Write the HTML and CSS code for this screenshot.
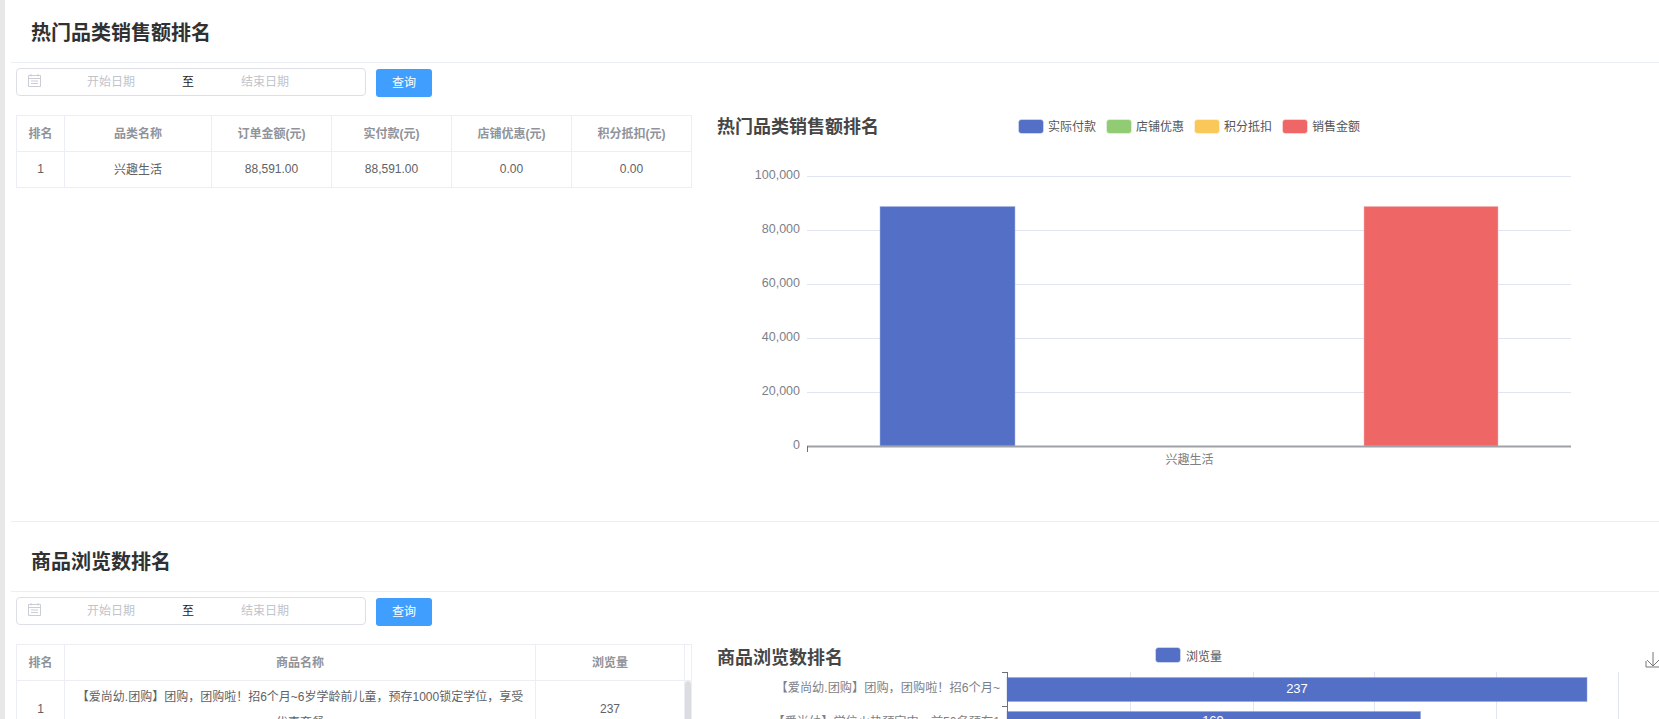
FILE: index.html
```html
<!DOCTYPE html>
<html lang="en">

<head>
  <meta charset="UTF-8">
  <meta name="viewport" content="width=device-width, initial-scale=1.0">
  <title>销售排名</title>
  <link rel="stylesheet" href="styles.css">
</head>

<body>
  <div class="page">
    <div class="side-strip"></div>
    <div class="main">

      <section class="rank-section">
        <h2 class="section-title">热门品类销售额排名</h2>
        <div class="toolbar">
          <div class="date-range">
            <svg class="date-icon" viewBox="0 0 15 15">
              <path d="M1.5 2.500h12v11h-12z M1.500 5.500h12 M4 1v2.500 M11 1v2.500 M4 8h7 M4 10.500h7" fill="none" stroke="#c9cdd6" stroke-width="1"/>
            </svg>
            <span class="date-input">开始日期</span>
            <span class="date-sep">至</span>
            <span class="date-input">结束日期</span>
          </div>
          <a href="#" class="query-btn">查询</a>
        </div>
        <div class="content-row">
          <table class="rank-table">
            <colgroup>
              <col class="col-rank">
              <col class="col-cat">
              <col class="col-num">
              <col class="col-num">
              <col class="col-num">
              <col class="col-num">
            </colgroup>
            <thead>
              <tr>
                <th>排名</th>
                <th>品类名称</th>
                <th>订单金额(元)</th>
                <th>实付款(元)</th>
                <th>店铺优惠(元)</th>
                <th>积分抵扣(元)</th>
              </tr>
            </thead>
            <tbody>
              <tr>
                <td>1</td>
                <td>兴趣生活</td>
                <td>88,591.00</td>
                <td>88,591.00</td>
                <td>0.00</td>
                <td>0.00</td>
              </tr>
            </tbody>
          </table>

          <svg class="chart chart-sales" viewBox="0 0 960 406">
            <text class="chart-title" x="17" y="18">热门品类销售额排名</text>

            <rect class="swatch" x="318.500" y="4.500" width="25" height="14" rx="3" fill="#5470c6"/>
            <text class="legend-text" x="348" y="15.500">实际付款</text>
            <rect class="swatch" x="406.500" y="4.500" width="25" height="14" rx="3" fill="#91cc75"/>
            <text class="legend-text" x="436" y="15.500">店铺优惠</text>
            <rect class="swatch" x="494.500" y="4.500" width="25" height="14" rx="3" fill="#fac858"/>
            <text class="legend-text" x="524" y="15.500">积分抵扣</text>
            <rect class="swatch" x="582.500" y="4.500" width="25" height="14" rx="3" fill="#ee6666"/>
            <text class="legend-text" x="612" y="15.500">销售金额</text>

            <path class="grid-line" d="M107 61.500H871 M107 115.500H871 M107 169.500H871 M107 223.500H871 M107 277.500H871"/>

            <text class="axis-num" text-anchor="end" x="100" y="64">100,000</text>
            <text class="axis-num" text-anchor="end" x="100" y="118">80,000</text>
            <text class="axis-num" text-anchor="end" x="100" y="172">60,000</text>
            <text class="axis-num" text-anchor="end" x="100" y="226">40,000</text>
            <text class="axis-num" text-anchor="end" x="100" y="280">20,000</text>
            <text class="axis-num" text-anchor="end" x="100" y="334">0</text>

            <rect x="180" y="91.500" width="135" height="239.500" fill="#5470c6" stroke="#a9b7e3" stroke-width="0.500"/>
            <rect x="664" y="91.500" width="134" height="239.500" fill="#ee6666" stroke="#f6b3b3" stroke-width="0.500"/>

            <path class="axis-line" d="M107 331.500H871"/>
            <path class="axis-tick" d="M107.500 331V337"/>
            <text class="axis-text" text-anchor="middle" x="489.500" y="349">兴趣生活</text>
          </svg>
        </div>
      </section>

      <section class="rank-section rank-section-next">
        <h2 class="section-title">商品浏览数排名</h2>
        <div class="toolbar">
          <div class="date-range">
            <svg class="date-icon" viewBox="0 0 15 15">
              <path d="M1.500 2.500h12v11h-12z M1.500 5.500h12 M4 1v2.500 M11 1v2.500 M4 8h7 M4 10.500h7" fill="none" stroke="#c9cdd6" stroke-width="1"/>
            </svg>
            <span class="date-input">开始日期</span>
            <span class="date-sep">至</span>
            <span class="date-input">结束日期</span>
          </div>
          <a href="#" class="query-btn">查询</a>
        </div>
        <div class="content-row">
          <table class="rank-table">
            <colgroup>
              <col class="col-rank">
              <col class="col-goods">
              <col class="col-views">
              <col class="col-gutter">
            </colgroup>
            <thead>
              <tr>
                <th>排名</th>
                <th>商品名称</th>
                <th>浏览量</th>
                <th class="gutter-head"></th>
              </tr>
            </thead>
            <tbody>
              <tr>
                <td>1</td>
                <td class="goods-name">【爱尚幼.团购】团购，团购啦！招6个月~6岁学龄前儿童，预存1000锁定学位，享受优惠套餐</td>
                <td>237</td>
                <td class="gutter-cell"><div class="scroll-thumb"></div></td>
              </tr>
            </tbody>
          </table>

          <svg class="chart chart-views" viewBox="0 0 960 406">
            <text class="chart-title" x="17" y="20">商品浏览数排名</text>

            <rect class="swatch" x="455.500" y="3.500" width="25" height="15" rx="3" fill="#5470c6"/>
            <text class="legend-text" x="486" y="16.500">浏览量</text>

            <path class="download-icon" d="M946 17V23H960V17 M953 8V22 M947 16L953 22L959 16"/>

            <path class="grid-line" d="M430.500 28V90 M553.500 28V90 M674.500 28V90 M796.500 28V90 M918.500 28V90"/>

            <rect x="307" y="33.500" width="580" height="24" fill="#5470c6" stroke="#8fa2dc" stroke-width="0.500"/>
            <rect x="307" y="67.500" width="413.500" height="24" fill="#5470c6" stroke="#8fa2dc" stroke-width="0.500"/>

            <path class="axis-line-thin" d="M307.500 28V90 M302 28.500H307 M302 62.500H307"/>

            <text class="goods-label" text-anchor="end" x="300" y="48">【爱尚幼.团购】团购，团购啦！招6个月~</text>
            <text class="goods-label" text-anchor="end" x="300" y="82">【爱尚幼】学位火热预定中，前50名预存1</text>

            <text class="bar-value" text-anchor="middle" x="597" y="49">237</text>
            <text class="bar-value" text-anchor="middle" x="513" y="81">169</text>
          </svg>
        </div>
      </section>

    </div>
  </div>
</body>

</html>
```

FILE: styles.css
```css
html,
body {
  margin: 0;
  height: 719px;
  overflow: hidden;
  background: #fff;
  font-family: "Liberation Sans", "Noto Sans CJK SC", sans-serif;
  font-size: 12px;
  color: #606266;
}

.page {
  display: flex;
  height: 719px;
  overflow: hidden;
}

.side-strip {
  flex: 0 0 5px;
  background: #e8e8e8;
}

.main {
  flex: 1;
  min-width: 0;
  padding-left: 6px;
}

.rank-section {
  border-bottom: 1px solid #ebeef5;
}

.rank-section-next {
  margin-top: 7px;
  border-bottom: 0;
}

.section-title {
  margin: 0;
  height: 62px;
  padding-left: 20px;
  line-height: 66px;
  font-size: 20px;
  font-weight: 700;
  color: #303133;
  border-bottom: 1px solid #ebeef5;
}

.toolbar {
  display: flex;
  align-items: flex-start;
  gap: 10px;
  padding: 5px 0 18px 5px;
}

.date-range {
  display: flex;
  align-items: center;
  box-sizing: border-box;
  width: 350px;
  height: 28px;
  padding: 0 0 4px 10px;
  border: 1px solid #dcdfe6;
  border-radius: 4px;
}

.date-icon {
  flex: 0 0 15px;
  width: 15px;
  height: 15px;
  margin-right: 1px;
}

.date-input {
  width: 136px;
  text-align: center;
  color: #c0c4cc;
}

.date-sep {
  width: 18px;
  text-align: center;
  color: #222;
}

.query-btn {
  display: block;
  width: 56px;
  height: 28px;
  margin-top: 1px;
  line-height: 28px;
  text-align: center;
  text-decoration: none;
  color: #fff;
  background: #409eff;
  border-radius: 3px;
}

.content-row {
  display: flex;
  align-items: flex-start;
  gap: 8px;
  padding-left: 5px;
}

.rank-table {
  flex: 0 0 675px;
  width: 675px;
  table-layout: fixed;
  border-collapse: collapse;
  border: 1px solid #ebeef5;
}

.rank-table th,
.rank-table td {
  height: 36px;
  box-sizing: border-box;
  padding: 0 0 2px;
  border: 1px solid #ebeef5;
  text-align: center;
}

.rank-table th {
  font-weight: 700;
  color: #909399;
}

.col-rank {
  width: 48px;
}

.col-cat {
  width: 147px;
}

.col-num {
  width: 120px;
}

.col-goods {
  width: 471px;
}

.col-views {
  width: 149px;
}

.col-gutter {
  width: 7px;
}

.rank-table td.goods-name {
  padding: 3px 8px;
  line-height: 26px;
}

.rank-table .gutter-cell {
  padding: 0;
  vertical-align: top;
}

.scroll-thumb {
  height: 58px;
  background: #dcdde0;
  border-radius: 4px 4px 0 0;
}

.chart {
  flex: 0 0 960px;
  width: 960px;
  height: 406px;
  display: block;
}

.chart text {
  font-family: "Liberation Sans", "Noto Sans CJK SC", sans-serif;
}

.chart .chart-title {
  font-size: 18px;
  font-weight: 700;
  fill: #464646;
}

.chart .legend-text {
  font-size: 12px;
  fill: #555;
}

.chart .axis-text {
  font-size: 12px;
  fill: #7d7f87;
}

.chart .axis-num {
  font-size: 12.5px;
  fill: #7d7f87;
}

.chart .goods-label {
  font-size: 12.2px;
  fill: #7d7f87;
}

.chart .bar-value {
  font-size: 13px;
  fill: #fff;
}

.swatch {
  stroke: #fff;
  stroke-opacity: 0.4;
}

.grid-line {
  fill: none;
  stroke: #e0e6f1;
  stroke-width: 1;
}

.axis-line {
  fill: none;
  stroke: #a0a2aa;
  stroke-width: 2;
}

.axis-tick,
.axis-line-thin {
  fill: none;
  stroke: #6e7079;
  stroke-width: 1;
}

.download-icon {
  fill: none;
  stroke: #777;
  stroke-width: 1;
}
```
